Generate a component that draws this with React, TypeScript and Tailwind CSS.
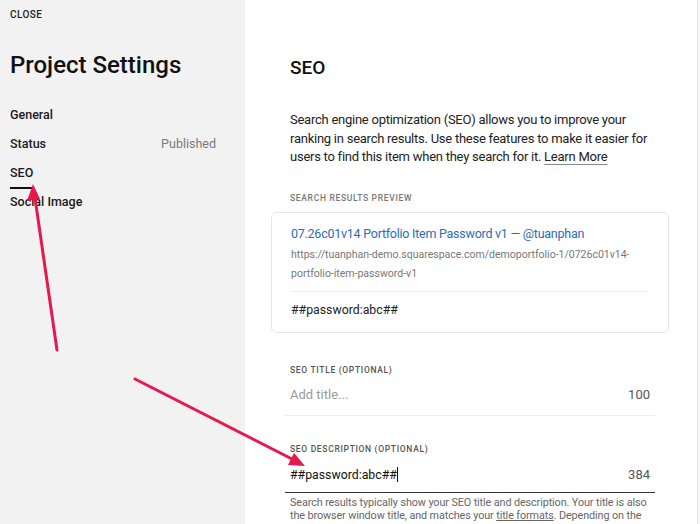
import React from "react";

export default function App() {
  const font = { fontFamily: "Roboto, 'Liberation Sans', sans-serif" };
  return (
    <div className="relative w-[700px] h-[524px] overflow-hidden flex bg-white text-[#1a1a1a]" style={font}>
      {/* Left sidebar */}
      <div className="w-[245px] h-full bg-[#f2f2f2] px-[10px] pt-[9px] flex flex-col">
        <div className="text-[10px] leading-[12px] font-medium tracking-[0.04em] text-[#222]">CLOSE</div>
        <div className="mt-[28px] text-[24px] leading-[32px] font-medium text-[#111]">Project Settings</div>
        <div className="mt-[20px] flex flex-col text-[12.5px] font-medium text-[#1a1a1a]">
          <div className="h-[29px] flex items-center">General</div>
          <div className="h-[29px] flex items-center justify-between pr-[19px]">
            <span>Status</span>
            <span className="text-[#7a7a7a] font-normal">Published</span>
          </div>
          <div className="h-[29px] flex items-center">
            <span className="relative">
              SEO
              <span className="absolute left-0 right-0 -bottom-[6px] h-[2px] bg-[#111]" />
            </span>
          </div>
          <div className="h-[29px] flex items-center">Social Image</div>
        </div>
      </div>

      {/* Right panel */}
      <div className="w-[452px] h-full bg-white pl-[45px] pt-[52px]">
        <div className="w-[360px]">
          <div className="text-[19px] leading-[32px] font-medium text-[#111]">SEO</div>
          <p className="mt-[27px] w-[366px] text-[13px] leading-[18.5px] tracking-[-0.25px] text-[#222]">
            Search engine optimization (SEO) allows you to improve your ranking in search results. Use these features to make it easier for users to find this item when they search for it.{" "}
            <span className="underline underline-offset-[3px] decoration-[#888]">Learn More</span>
          </p>
          <div className="mt-[25px] text-[8.5px] leading-[12px] tracking-[0.08em] font-medium text-[#777]">SEARCH RESULTS PREVIEW</div>
          <div className="mt-[8px] -mx-[19px] border border-[#e6e6e6] rounded-[6px] px-[19px] pt-[10px] pb-[11px]">
            <div className="text-[12.5px] leading-[22px] tracking-[-0.25px] text-[#2c6bb8]">07.26c01v14 Portfolio Item Password v1 — @tuanphan</div>
            <div className="text-[10.5px] leading-[19px] text-[#777]">
              https://tuanphan-demo.squarespace.com/demoportfolio-1/0726c01v14-portfolio-item-password-v1
            </div>
            <div className="mt-[8px] h-px bg-[#ececec]" />
            <div className="pt-[7px] text-[12.3px] leading-[22px] text-[#222]">##password:abc##</div>
          </div>

          <div className="mt-[31px] -mx-[5px] px-[5px] pb-[11px] border-b border-[#eeeeee]">
            <div className="text-[8.5px] leading-[12px] tracking-[0.08em] font-medium text-[#555]">SEO TITLE (OPTIONAL)</div>
            <div className="mt-[10px] flex justify-between text-[13px] leading-[18px]">
              <span className="text-[#9a9a9a]">Add title...</span>
              <span className="text-[#555]">100</span>
            </div>
          </div>

          <div className="mt-[27px] -mx-[5px] px-[5px] pb-[8px] border-b border-[#333]">
            <div className="text-[8.5px] leading-[12px] tracking-[0.08em] font-medium text-[#555]">SEO DESCRIPTION (OPTIONAL)</div>
            <div className="mt-[11px] flex justify-between text-[13px] leading-[18px]">
              <span className="text-[#111] text-[12.3px] flex items-center">
                ##password:abc##
                <span className="inline-block w-px h-[15px] bg-[#111]" />
              </span>
              <span className="text-[#555]">384</span>
            </div>
          </div>
          <p className="mt-[3px] text-[10.8px] leading-[13.5px] tracking-[-0.1px] text-[#666]">
            Search results typically show your SEO title and description. Your title is also the browser window title, and matches your{" "}
            <span className="underline">title formats</span>. Depending on the
          </p>
        </div>
      </div>
      <div className="w-[3px] h-full border-l border-[#e4e4e4] bg-[#f5f5f5]" />

      {/* Annotation arrows */}
      <svg className="absolute inset-0 pointer-events-none" width="700" height="524" viewBox="0 0 700 524">
        <line x1="57" y1="350" x2="35" y2="198" stroke="#e5194d" strokeWidth="3" strokeLinecap="round" />
        <polygon points="33,184 27,201 40,199" fill="#e5194d" />
        <line x1="135" y1="379" x2="292" y2="459" stroke="#e5194d" strokeWidth="3" strokeLinecap="round" />
        <polygon points="305,466 288,465 294,453" fill="#e5194d" />
      </svg>
    </div>
  );
}
